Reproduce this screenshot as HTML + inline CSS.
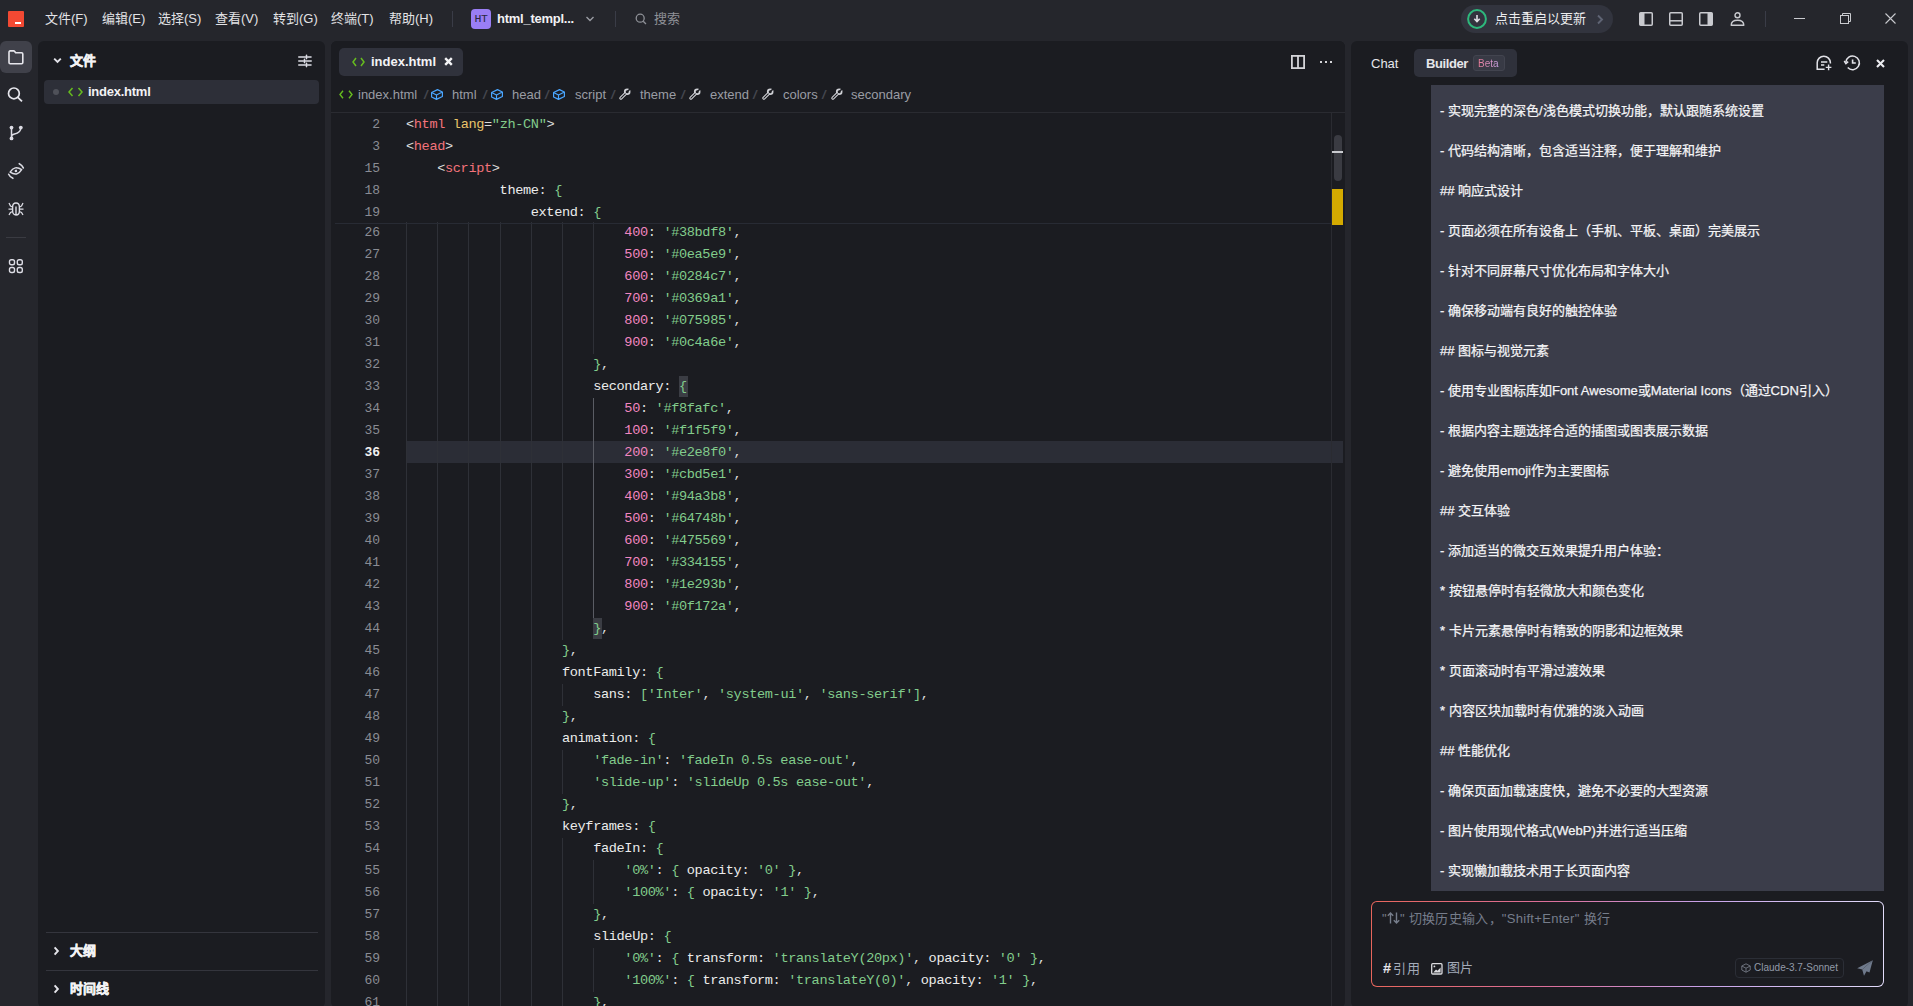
<!DOCTYPE html>
<html lang="zh-CN">
<head>
<meta charset="utf-8">
<style>
*{box-sizing:border-box;margin:0;padding:0}
html,body{width:1913px;height:1006px;overflow:hidden;background:#25262c;font-family:"Liberation Sans",sans-serif;color:#e4e4e7}
.abs{position:absolute}
svg{display:block;position:absolute;overflow:visible}
.menu{position:absolute;top:11px;font-size:13px;color:#e3e3e6;line-height:16px;white-space:nowrap}
.panel{position:absolute;background:#1b1c21;border-radius:6px}
#files{left:38px;top:41px;width:287px;height:967px}
#editor{left:331px;top:41px;width:1014px;height:967px;overflow:hidden}
#chat{left:1351px;top:41px;width:557px;height:967px}
.code{position:absolute;font-family:"Liberation Mono",monospace;font-size:13.6px;letter-spacing:-0.36px;line-height:22px;white-space:pre;color:#e6e6e6}
.ln{position:absolute;width:49px;left:0;text-align:right;font-family:"Liberation Mono",monospace;font-size:13px;line-height:22px;color:#8a8c94}
.ln.act{color:#f0f0f0;font-weight:bold}
.guide{position:absolute;width:1px;height:22px;background:#2e3037}
.guide.ga{background:#5a5c64}
.t{color:#f3737b}.p{color:#dcdcdc}.a{color:#e9c46a}.s{color:#82cc8c}.n{color:#f286c0}.b{color:#82cc8c}.k{color:#ececec}
.chatline{position:absolute;left:1440px;font-size:13px;line-height:16px;color:#f4f4f6;white-space:nowrap;-webkit-text-stroke:0.25px #f4f4f6}
.bc{position:absolute;top:87px;font-size:13px;line-height:16px;color:#9a9ca4;white-space:nowrap}
.sep{position:absolute;top:87px;font-size:13px;line-height:16px;color:#44464e;font-style:italic;font-weight:bold}
</style>
</head>
<body>
<!-- TITLE BAR -->
<div class="abs" style="left:8px;top:11px;width:16px;height:16px;background:#f24933;border-radius:1px"></div>
<div class="abs" style="left:15px;top:22px;width:6px;height:2px;background:#fff"></div>
<div class="menu" style="left:45px">文件(F)</div>
<div class="menu" style="left:102px">编辑(E)</div>
<div class="menu" style="left:158px">选择(S)</div>
<div class="menu" style="left:215px">查看(V)</div>
<div class="menu" style="left:273px">转到(G)</div>
<div class="menu" style="left:331px">终端(T)</div>
<div class="menu" style="left:389px">帮助(H)</div>
<div class="abs" style="left:452px;top:11px;width:1px;height:16px;background:#3a3c47"></div>
<div class="abs" style="left:471px;top:9px;width:20px;height:20px;background:#9a7ef4;border-radius:4px;font-family:'Liberation Mono',monospace;font-size:11.5px;line-height:20px;text-align:center;color:#2b2740;letter-spacing:-0.5px">HT</div>
<div class="menu" style="left:497px;font-weight:bold;color:#f2f2f4;letter-spacing:-0.25px">html_templ...</div>
<svg style="left:585px;top:15px" width="10" height="8" viewBox="0 0 10 8"><path d="M1.5 2 L5 5.5 L8.5 2" fill="none" stroke="#9a9ca3" stroke-width="1.4"/></svg>
<div class="abs" style="left:615px;top:11px;width:1px;height:16px;background:#3a3c47"></div>
<svg style="left:635px;top:13px" width="12" height="12" viewBox="0 0 12 12"><circle cx="5.2" cy="5.2" r="4" fill="none" stroke="#8e9097" stroke-width="1.3"/><path d="M8.2 8.2 L11 11" stroke="#8e9097" stroke-width="1.3"/></svg>
<div class="menu" style="left:654px;color:#8e9097">搜索</div>

<div class="abs" style="left:1461px;top:5px;width:152px;height:28px;background:#32343e;border-radius:14px"></div>
<svg style="left:1467px;top:9px" width="20" height="20" viewBox="0 0 20 20"><circle cx="10" cy="10" r="8.9" fill="none" stroke="#2eb87c" stroke-width="2"/><path d="M10 6 V12.5 M7.3 9.8 L10 12.6 L12.7 9.8" fill="none" stroke="#e0e0e6" stroke-width="1.6"/></svg>
<div class="menu" style="left:1495px;top:11px;color:#ececee">点击重启以更新</div>
<svg style="left:1596px;top:14px" width="8" height="11" viewBox="0 0 8 11"><path d="M2 1.5 L6 5.5 L2 9.5" fill="none" stroke="#5f6474" stroke-width="1.9"/></svg>
<svg style="left:1639px;top:12px" width="14" height="14" viewBox="0 0 14 14"><rect x="0.75" y="0.75" width="12.5" height="12.5" rx="1" fill="none" stroke="#c9cacf" stroke-width="1.5"/><rect x="0.8" y="0.8" width="4.7" height="12.4" rx="0.8" fill="#c9cacf"/></svg>
<svg style="left:1669px;top:12px" width="14" height="14" viewBox="0 0 14 14"><rect x="0.75" y="0.75" width="12.5" height="12.5" rx="1" fill="none" stroke="#c9cacf" stroke-width="1.5"/><path d="M1 8.8 H13" stroke="#c9cacf" stroke-width="1.5"/></svg>
<svg style="left:1699px;top:12px" width="14" height="14" viewBox="0 0 14 14"><rect x="0.75" y="0.75" width="12.5" height="12.5" rx="1" fill="none" stroke="#c9cacf" stroke-width="1.5"/><rect x="8.5" y="0.8" width="4.7" height="12.4" rx="0.8" fill="#c9cacf"/></svg>
<svg style="left:1730px;top:12px" width="15" height="15" viewBox="0 0 15 15"><circle cx="7.5" cy="3.3" r="2.5" fill="none" stroke="#c9cacf" stroke-width="1.4"/><path d="M1.2 13.3 C1.2 9.8 4 8.3 7.5 8.3 C11 8.3 13.8 9.8 13.8 13.3 Z" fill="none" stroke="#c9cacf" stroke-width="1.4" stroke-linejoin="round"/></svg>
<div class="abs" style="left:1765px;top:11px;width:1px;height:16px;background:#3a3c47"></div>
<div class="abs" style="left:1794px;top:18px;width:11px;height:1px;background:#c9cacf"></div>
<svg style="left:1840px;top:13px" width="11" height="11" viewBox="0 0 11 11"><rect x="0.5" y="2.5" width="8" height="8" fill="none" stroke="#c9cacf" stroke-width="1"/><path d="M2.5 2.5 V0.5 H10.5 V8.5 H8.5" fill="none" stroke="#c9cacf" stroke-width="1"/></svg>
<svg style="left:1885px;top:13px" width="11" height="11" viewBox="0 0 11 11"><path d="M0.5 0.5 L10.5 10.5 M10.5 0.5 L0.5 10.5" stroke="#c9cacf" stroke-width="1.1"/></svg>

<!-- ACTIVITY BAR -->
<div class="abs" style="left:0;top:41px;width:32px;height:32px;background:#40414a;border-radius:6px"></div>
<svg style="left:8px;top:50px" width="16" height="15" viewBox="0 0 16 15"><path d="M1 2.2 C1 1.4 1.4 0.9 2.2 0.9 H5.6 C6.1 0.9 6.4 1.1 6.7 1.5 L7.6 2.8 H13.6 C14.4 2.8 14.8 3.2 14.8 4 V12.6 C14.8 13.4 14.4 13.8 13.6 13.8 H2.2 C1.4 13.8 1 13.4 1 12.6 Z" fill="none" stroke="#e6e6ec" stroke-width="1.6"/></svg>
<svg style="left:7px;top:86px" width="17" height="17" viewBox="0 0 17 17"><circle cx="6.9" cy="7.4" r="5.4" fill="none" stroke="#e6e6ec" stroke-width="1.7"/><path d="M10.8 11.3 L15 15.3" stroke="#e6e6ec" stroke-width="1.8"/></svg>
<svg style="left:8px;top:124px" width="16" height="16" viewBox="0 0 16 16"><path d="M3.5 3.5 V14.5 M12.8 3.5 C12.8 8.5 9.5 9.5 6.5 10 C4.6 10.4 3.5 11.5 3.5 13" fill="none" stroke="#dcdce4" stroke-width="1.5"/><circle cx="3.5" cy="3.6" r="1.9" fill="#dcdce4"/><circle cx="12.8" cy="3.6" r="1.9" fill="#dcdce4"/><circle cx="3.5" cy="14.4" r="1.9" fill="#dcdce4"/></svg>
<svg style="left:6px;top:161px" width="20" height="20" viewBox="0 0 20 20"><g transform="translate(9.9 9.9) rotate(-12)"><path d="M-5.9 0 Q0 -6.2 5.9 0 Q0 6.2 -5.9 0 Z" fill="none" stroke="#dcdce4" stroke-width="1.5" stroke-linejoin="round"/><circle cx="0" cy="0" r="1.3" fill="#dcdce4"/></g><path d="M13.28 2.65 A8 8 0 0 1 17.32 6.9 M6.9 17.32 A8 8 0 0 1 2.65 13.28" fill="none" stroke="#dcdce4" stroke-width="1.6" stroke-linecap="round"/></svg>
<svg style="left:8px;top:202px" width="16" height="14" viewBox="0 0 16 14"><path d="M4.6 5 C4.6 2.6 6 1 8 1 C10 1 11.4 2.6 11.4 5 V9 C11.4 11.4 10 13 8 13 C6 13 4.6 11.4 4.6 9 Z M8 4.5 V13" fill="none" stroke="#dcdce4" stroke-width="1.4"/><path d="M1 1 L2.5 4 L4.6 5 M15 1 L13.5 4 L11.4 5 M0.5 7.2 H4.6 M15.5 7.2 H11.4 M1 13 L2.5 10.5 L4.6 9.5 M15 13 L13.5 10.5 L11.4 9.5" fill="none" stroke="#dcdce4" stroke-width="1.3"/></svg>
<div class="abs" style="left:6px;top:237px;width:20px;height:1px;background:#3a3b42"></div>
<svg style="left:8px;top:258px" width="16" height="16" viewBox="0 0 16 16"><rect x="1.5" y="1.7" width="5" height="5" rx="1.8" fill="none" stroke="#dcdce4" stroke-width="1.4"/><rect x="9.3" y="1.7" width="5" height="5" rx="1.8" fill="none" stroke="#dcdce4" stroke-width="1.4"/><rect x="1.5" y="9.5" width="5" height="5" rx="1.8" fill="none" stroke="#dcdce4" stroke-width="1.4"/><rect x="9.3" y="9.5" width="5" height="5" rx="1.8" fill="none" stroke="#dcdce4" stroke-width="1.4"/></svg>

<!-- FILES PANEL -->
<div id="files" class="panel"></div>
<svg style="left:53px;top:57px" width="9" height="7" viewBox="0 0 9 7"><path d="M1.2 1.6 L4.5 4.9 L7.8 1.6" fill="none" stroke="#e4e4ea" stroke-width="1.9"/></svg>
<div class="abs" style="left:70px;top:53px;font-size:13px;line-height:16px;font-weight:bold;color:#f2f2f4;-webkit-text-stroke:0.5px #f2f2f4">文件</div>
<svg style="left:298px;top:55px" width="14" height="12" viewBox="0 0 14 12"><path d="M0.8 2 H7.4 M9.6 2 H13 M0.8 6 H5.4 M7.6 6 H13.2 M0.8 10 H7.4 M9.6 10 H13" stroke="#dcdce4" stroke-width="1.6" stroke-linecap="round"/><path d="M8.5 0.4 V3.6 M6.5 4.4 V7.6 M8.5 8.4 V11.6" stroke="#dcdce4" stroke-width="1.6" stroke-linecap="round"/></svg>
<div class="abs" style="left:44px;top:80px;width:275px;height:24px;background:#2d2f38;border-radius:4px"></div>
<div class="abs" style="left:53px;top:89px;width:6px;height:6px;background:#4f5159;border-radius:50%"></div>
<svg style="left:68px;top:87px" width="15" height="10" viewBox="0 0 15 10"><path d="M4.5 1 L1 5 L4.5 9 M10.5 1 L14 5 L10.5 9" fill="none" stroke="#66bc1f" stroke-width="1.5"/></svg>
<div class="abs" style="left:88px;top:84px;font-size:13px;line-height:16px;font-weight:bold;color:#f2f2f4;letter-spacing:-0.25px">index.html</div>
<div class="abs" style="left:46px;top:932px;width:272px;height:1px;background:#34353d"></div>
<svg style="left:53px;top:946px" width="7" height="10" viewBox="0 0 7 10"><path d="M1.6 1.4 L4.9 5 L1.6 8.6" fill="none" stroke="#e4e4ea" stroke-width="1.9"/></svg>
<div class="abs" style="left:70px;top:943px;font-size:13px;line-height:16px;font-weight:bold;color:#f2f2f4;-webkit-text-stroke:0.5px #f2f2f4">大纲</div>
<div class="abs" style="left:46px;top:970px;width:272px;height:1px;background:#34353d"></div>
<svg style="left:53px;top:984px" width="7" height="10" viewBox="0 0 7 10"><path d="M1.6 1.4 L4.9 5 L1.6 8.6" fill="none" stroke="#e4e4ea" stroke-width="1.9"/></svg>
<div class="abs" style="left:70px;top:981px;font-size:13px;line-height:16px;font-weight:bold;color:#f2f2f4;-webkit-text-stroke:0.5px #f2f2f4">时间线</div>

<!-- EDITOR -->
<div id="editor" class="panel">
<div class="abs" style="left:75px;top:400px;width:937px;height:22px;background:#2b2d36"></div>
<div class="abs" style="left:348px;top:335px;width:9px;height:21px;background:#3b3d44"></div>
<div class="abs" style="left:262px;top:577px;width:9px;height:21px;background:#3b3d44"></div>
<div class="guide" style="left:75.0px;top:181px"></div>
<div class="guide" style="left:106.2px;top:181px"></div>
<div class="guide" style="left:137.4px;top:181px"></div>
<div class="guide" style="left:168.6px;top:181px"></div>
<div class="guide" style="left:199.8px;top:181px"></div>
<div class="guide" style="left:231.0px;top:181px"></div>
<div class="guide" style="left:262.2px;top:181px"></div>
<div class="guide" style="left:75.0px;top:203px"></div>
<div class="guide" style="left:106.2px;top:203px"></div>
<div class="guide" style="left:137.4px;top:203px"></div>
<div class="guide" style="left:168.6px;top:203px"></div>
<div class="guide" style="left:199.8px;top:203px"></div>
<div class="guide" style="left:231.0px;top:203px"></div>
<div class="guide" style="left:262.2px;top:203px"></div>
<div class="guide" style="left:75.0px;top:225px"></div>
<div class="guide" style="left:106.2px;top:225px"></div>
<div class="guide" style="left:137.4px;top:225px"></div>
<div class="guide" style="left:168.6px;top:225px"></div>
<div class="guide" style="left:199.8px;top:225px"></div>
<div class="guide" style="left:231.0px;top:225px"></div>
<div class="guide" style="left:262.2px;top:225px"></div>
<div class="guide" style="left:75.0px;top:247px"></div>
<div class="guide" style="left:106.2px;top:247px"></div>
<div class="guide" style="left:137.4px;top:247px"></div>
<div class="guide" style="left:168.6px;top:247px"></div>
<div class="guide" style="left:199.8px;top:247px"></div>
<div class="guide" style="left:231.0px;top:247px"></div>
<div class="guide" style="left:262.2px;top:247px"></div>
<div class="guide" style="left:75.0px;top:269px"></div>
<div class="guide" style="left:106.2px;top:269px"></div>
<div class="guide" style="left:137.4px;top:269px"></div>
<div class="guide" style="left:168.6px;top:269px"></div>
<div class="guide" style="left:199.8px;top:269px"></div>
<div class="guide" style="left:231.0px;top:269px"></div>
<div class="guide" style="left:262.2px;top:269px"></div>
<div class="guide" style="left:75.0px;top:291px"></div>
<div class="guide" style="left:106.2px;top:291px"></div>
<div class="guide" style="left:137.4px;top:291px"></div>
<div class="guide" style="left:168.6px;top:291px"></div>
<div class="guide" style="left:199.8px;top:291px"></div>
<div class="guide" style="left:231.0px;top:291px"></div>
<div class="guide" style="left:262.2px;top:291px"></div>
<div class="guide" style="left:75.0px;top:313px"></div>
<div class="guide" style="left:106.2px;top:313px"></div>
<div class="guide" style="left:137.4px;top:313px"></div>
<div class="guide" style="left:168.6px;top:313px"></div>
<div class="guide" style="left:199.8px;top:313px"></div>
<div class="guide" style="left:231.0px;top:313px"></div>
<div class="guide" style="left:75.0px;top:335px"></div>
<div class="guide" style="left:106.2px;top:335px"></div>
<div class="guide" style="left:137.4px;top:335px"></div>
<div class="guide" style="left:168.6px;top:335px"></div>
<div class="guide" style="left:199.8px;top:335px"></div>
<div class="guide" style="left:231.0px;top:335px"></div>
<div class="guide" style="left:75.0px;top:357px"></div>
<div class="guide" style="left:106.2px;top:357px"></div>
<div class="guide" style="left:137.4px;top:357px"></div>
<div class="guide" style="left:168.6px;top:357px"></div>
<div class="guide" style="left:199.8px;top:357px"></div>
<div class="guide" style="left:231.0px;top:357px"></div>
<div class="guide ga" style="left:262.2px;top:357px"></div>
<div class="guide" style="left:75.0px;top:379px"></div>
<div class="guide" style="left:106.2px;top:379px"></div>
<div class="guide" style="left:137.4px;top:379px"></div>
<div class="guide" style="left:168.6px;top:379px"></div>
<div class="guide" style="left:199.8px;top:379px"></div>
<div class="guide" style="left:231.0px;top:379px"></div>
<div class="guide ga" style="left:262.2px;top:379px"></div>
<div class="guide" style="left:75.0px;top:401px"></div>
<div class="guide" style="left:106.2px;top:401px"></div>
<div class="guide" style="left:137.4px;top:401px"></div>
<div class="guide" style="left:168.6px;top:401px"></div>
<div class="guide" style="left:199.8px;top:401px"></div>
<div class="guide" style="left:231.0px;top:401px"></div>
<div class="guide ga" style="left:262.2px;top:401px"></div>
<div class="guide" style="left:75.0px;top:423px"></div>
<div class="guide" style="left:106.2px;top:423px"></div>
<div class="guide" style="left:137.4px;top:423px"></div>
<div class="guide" style="left:168.6px;top:423px"></div>
<div class="guide" style="left:199.8px;top:423px"></div>
<div class="guide" style="left:231.0px;top:423px"></div>
<div class="guide ga" style="left:262.2px;top:423px"></div>
<div class="guide" style="left:75.0px;top:445px"></div>
<div class="guide" style="left:106.2px;top:445px"></div>
<div class="guide" style="left:137.4px;top:445px"></div>
<div class="guide" style="left:168.6px;top:445px"></div>
<div class="guide" style="left:199.8px;top:445px"></div>
<div class="guide" style="left:231.0px;top:445px"></div>
<div class="guide ga" style="left:262.2px;top:445px"></div>
<div class="guide" style="left:75.0px;top:467px"></div>
<div class="guide" style="left:106.2px;top:467px"></div>
<div class="guide" style="left:137.4px;top:467px"></div>
<div class="guide" style="left:168.6px;top:467px"></div>
<div class="guide" style="left:199.8px;top:467px"></div>
<div class="guide" style="left:231.0px;top:467px"></div>
<div class="guide ga" style="left:262.2px;top:467px"></div>
<div class="guide" style="left:75.0px;top:489px"></div>
<div class="guide" style="left:106.2px;top:489px"></div>
<div class="guide" style="left:137.4px;top:489px"></div>
<div class="guide" style="left:168.6px;top:489px"></div>
<div class="guide" style="left:199.8px;top:489px"></div>
<div class="guide" style="left:231.0px;top:489px"></div>
<div class="guide ga" style="left:262.2px;top:489px"></div>
<div class="guide" style="left:75.0px;top:511px"></div>
<div class="guide" style="left:106.2px;top:511px"></div>
<div class="guide" style="left:137.4px;top:511px"></div>
<div class="guide" style="left:168.6px;top:511px"></div>
<div class="guide" style="left:199.8px;top:511px"></div>
<div class="guide" style="left:231.0px;top:511px"></div>
<div class="guide ga" style="left:262.2px;top:511px"></div>
<div class="guide" style="left:75.0px;top:533px"></div>
<div class="guide" style="left:106.2px;top:533px"></div>
<div class="guide" style="left:137.4px;top:533px"></div>
<div class="guide" style="left:168.6px;top:533px"></div>
<div class="guide" style="left:199.8px;top:533px"></div>
<div class="guide" style="left:231.0px;top:533px"></div>
<div class="guide ga" style="left:262.2px;top:533px"></div>
<div class="guide" style="left:75.0px;top:555px"></div>
<div class="guide" style="left:106.2px;top:555px"></div>
<div class="guide" style="left:137.4px;top:555px"></div>
<div class="guide" style="left:168.6px;top:555px"></div>
<div class="guide" style="left:199.8px;top:555px"></div>
<div class="guide" style="left:231.0px;top:555px"></div>
<div class="guide ga" style="left:262.2px;top:555px"></div>
<div class="guide" style="left:75.0px;top:577px"></div>
<div class="guide" style="left:106.2px;top:577px"></div>
<div class="guide" style="left:137.4px;top:577px"></div>
<div class="guide" style="left:168.6px;top:577px"></div>
<div class="guide" style="left:199.8px;top:577px"></div>
<div class="guide" style="left:231.0px;top:577px"></div>
<div class="guide" style="left:75.0px;top:599px"></div>
<div class="guide" style="left:106.2px;top:599px"></div>
<div class="guide" style="left:137.4px;top:599px"></div>
<div class="guide" style="left:168.6px;top:599px"></div>
<div class="guide" style="left:199.8px;top:599px"></div>
<div class="guide" style="left:75.0px;top:621px"></div>
<div class="guide" style="left:106.2px;top:621px"></div>
<div class="guide" style="left:137.4px;top:621px"></div>
<div class="guide" style="left:168.6px;top:621px"></div>
<div class="guide" style="left:199.8px;top:621px"></div>
<div class="guide" style="left:75.0px;top:643px"></div>
<div class="guide" style="left:106.2px;top:643px"></div>
<div class="guide" style="left:137.4px;top:643px"></div>
<div class="guide" style="left:168.6px;top:643px"></div>
<div class="guide" style="left:199.8px;top:643px"></div>
<div class="guide" style="left:231.0px;top:643px"></div>
<div class="guide" style="left:75.0px;top:665px"></div>
<div class="guide" style="left:106.2px;top:665px"></div>
<div class="guide" style="left:137.4px;top:665px"></div>
<div class="guide" style="left:168.6px;top:665px"></div>
<div class="guide" style="left:199.8px;top:665px"></div>
<div class="guide" style="left:75.0px;top:687px"></div>
<div class="guide" style="left:106.2px;top:687px"></div>
<div class="guide" style="left:137.4px;top:687px"></div>
<div class="guide" style="left:168.6px;top:687px"></div>
<div class="guide" style="left:199.8px;top:687px"></div>
<div class="guide" style="left:75.0px;top:709px"></div>
<div class="guide" style="left:106.2px;top:709px"></div>
<div class="guide" style="left:137.4px;top:709px"></div>
<div class="guide" style="left:168.6px;top:709px"></div>
<div class="guide" style="left:199.8px;top:709px"></div>
<div class="guide" style="left:231.0px;top:709px"></div>
<div class="guide" style="left:75.0px;top:731px"></div>
<div class="guide" style="left:106.2px;top:731px"></div>
<div class="guide" style="left:137.4px;top:731px"></div>
<div class="guide" style="left:168.6px;top:731px"></div>
<div class="guide" style="left:199.8px;top:731px"></div>
<div class="guide" style="left:231.0px;top:731px"></div>
<div class="guide" style="left:75.0px;top:753px"></div>
<div class="guide" style="left:106.2px;top:753px"></div>
<div class="guide" style="left:137.4px;top:753px"></div>
<div class="guide" style="left:168.6px;top:753px"></div>
<div class="guide" style="left:199.8px;top:753px"></div>
<div class="guide" style="left:75.0px;top:775px"></div>
<div class="guide" style="left:106.2px;top:775px"></div>
<div class="guide" style="left:137.4px;top:775px"></div>
<div class="guide" style="left:168.6px;top:775px"></div>
<div class="guide" style="left:199.8px;top:775px"></div>
<div class="guide" style="left:75.0px;top:797px"></div>
<div class="guide" style="left:106.2px;top:797px"></div>
<div class="guide" style="left:137.4px;top:797px"></div>
<div class="guide" style="left:168.6px;top:797px"></div>
<div class="guide" style="left:199.8px;top:797px"></div>
<div class="guide" style="left:231.0px;top:797px"></div>
<div class="guide" style="left:75.0px;top:819px"></div>
<div class="guide" style="left:106.2px;top:819px"></div>
<div class="guide" style="left:137.4px;top:819px"></div>
<div class="guide" style="left:168.6px;top:819px"></div>
<div class="guide" style="left:199.8px;top:819px"></div>
<div class="guide" style="left:231.0px;top:819px"></div>
<div class="guide" style="left:262.2px;top:819px"></div>
<div class="guide" style="left:75.0px;top:841px"></div>
<div class="guide" style="left:106.2px;top:841px"></div>
<div class="guide" style="left:137.4px;top:841px"></div>
<div class="guide" style="left:168.6px;top:841px"></div>
<div class="guide" style="left:199.8px;top:841px"></div>
<div class="guide" style="left:231.0px;top:841px"></div>
<div class="guide" style="left:262.2px;top:841px"></div>
<div class="guide" style="left:75.0px;top:863px"></div>
<div class="guide" style="left:106.2px;top:863px"></div>
<div class="guide" style="left:137.4px;top:863px"></div>
<div class="guide" style="left:168.6px;top:863px"></div>
<div class="guide" style="left:199.8px;top:863px"></div>
<div class="guide" style="left:231.0px;top:863px"></div>
<div class="guide" style="left:75.0px;top:885px"></div>
<div class="guide" style="left:106.2px;top:885px"></div>
<div class="guide" style="left:137.4px;top:885px"></div>
<div class="guide" style="left:168.6px;top:885px"></div>
<div class="guide" style="left:199.8px;top:885px"></div>
<div class="guide" style="left:231.0px;top:885px"></div>
<div class="guide" style="left:75.0px;top:907px"></div>
<div class="guide" style="left:106.2px;top:907px"></div>
<div class="guide" style="left:137.4px;top:907px"></div>
<div class="guide" style="left:168.6px;top:907px"></div>
<div class="guide" style="left:199.8px;top:907px"></div>
<div class="guide" style="left:231.0px;top:907px"></div>
<div class="guide" style="left:262.2px;top:907px"></div>
<div class="guide" style="left:75.0px;top:929px"></div>
<div class="guide" style="left:106.2px;top:929px"></div>
<div class="guide" style="left:137.4px;top:929px"></div>
<div class="guide" style="left:168.6px;top:929px"></div>
<div class="guide" style="left:199.8px;top:929px"></div>
<div class="guide" style="left:231.0px;top:929px"></div>
<div class="guide" style="left:262.2px;top:929px"></div>
<div class="guide" style="left:75.0px;top:951px"></div>
<div class="guide" style="left:106.2px;top:951px"></div>
<div class="guide" style="left:137.4px;top:951px"></div>
<div class="guide" style="left:168.6px;top:951px"></div>
<div class="guide" style="left:199.8px;top:951px"></div>
<div class="guide" style="left:231.0px;top:951px"></div>
<div class="ln" style="top:181px">26</div>
<div class="ln" style="top:203px">27</div>
<div class="ln" style="top:225px">28</div>
<div class="ln" style="top:247px">29</div>
<div class="ln" style="top:269px">30</div>
<div class="ln" style="top:291px">31</div>
<div class="ln" style="top:313px">32</div>
<div class="ln" style="top:335px">33</div>
<div class="ln" style="top:357px">34</div>
<div class="ln" style="top:379px">35</div>
<div class="ln act" style="top:401px">36</div>
<div class="ln" style="top:423px">37</div>
<div class="ln" style="top:445px">38</div>
<div class="ln" style="top:467px">39</div>
<div class="ln" style="top:489px">40</div>
<div class="ln" style="top:511px">41</div>
<div class="ln" style="top:533px">42</div>
<div class="ln" style="top:555px">43</div>
<div class="ln" style="top:577px">44</div>
<div class="ln" style="top:599px">45</div>
<div class="ln" style="top:621px">46</div>
<div class="ln" style="top:643px">47</div>
<div class="ln" style="top:665px">48</div>
<div class="ln" style="top:687px">49</div>
<div class="ln" style="top:709px">50</div>
<div class="ln" style="top:731px">51</div>
<div class="ln" style="top:753px">52</div>
<div class="ln" style="top:775px">53</div>
<div class="ln" style="top:797px">54</div>
<div class="ln" style="top:819px">55</div>
<div class="ln" style="top:841px">56</div>
<div class="ln" style="top:863px">57</div>
<div class="ln" style="top:885px">58</div>
<div class="ln" style="top:907px">59</div>
<div class="ln" style="top:929px">60</div>
<div class="ln" style="top:951px">61</div>
<div class="code" style="top:181px;left:75px">                            <span class="n">400</span><span class="p">:</span><span class="p"> </span><span class="s">'#38bdf8'</span><span class="p">,</span></div>
<div class="code" style="top:203px;left:75px">                            <span class="n">500</span><span class="p">:</span><span class="p"> </span><span class="s">'#0ea5e9'</span><span class="p">,</span></div>
<div class="code" style="top:225px;left:75px">                            <span class="n">600</span><span class="p">:</span><span class="p"> </span><span class="s">'#0284c7'</span><span class="p">,</span></div>
<div class="code" style="top:247px;left:75px">                            <span class="n">700</span><span class="p">:</span><span class="p"> </span><span class="s">'#0369a1'</span><span class="p">,</span></div>
<div class="code" style="top:269px;left:75px">                            <span class="n">800</span><span class="p">:</span><span class="p"> </span><span class="s">'#075985'</span><span class="p">,</span></div>
<div class="code" style="top:291px;left:75px">                            <span class="n">900</span><span class="p">:</span><span class="p"> </span><span class="s">'#0c4a6e'</span><span class="p">,</span></div>
<div class="code" style="top:313px;left:75px">                        <span class="b">}</span><span class="p">,</span></div>
<div class="code" style="top:335px;left:75px">                        <span class="k">secondary</span><span class="p">:</span><span class="p"> </span><span class="b">{</span></div>
<div class="code" style="top:357px;left:75px">                            <span class="n">50</span><span class="p">:</span><span class="p"> </span><span class="s">'#f8fafc'</span><span class="p">,</span></div>
<div class="code" style="top:379px;left:75px">                            <span class="n">100</span><span class="p">:</span><span class="p"> </span><span class="s">'#f1f5f9'</span><span class="p">,</span></div>
<div class="code" style="top:401px;left:75px">                            <span class="n">200</span><span class="p">:</span><span class="p"> </span><span class="s">'#e2e8f0'</span><span class="p">,</span></div>
<div class="code" style="top:423px;left:75px">                            <span class="n">300</span><span class="p">:</span><span class="p"> </span><span class="s">'#cbd5e1'</span><span class="p">,</span></div>
<div class="code" style="top:445px;left:75px">                            <span class="n">400</span><span class="p">:</span><span class="p"> </span><span class="s">'#94a3b8'</span><span class="p">,</span></div>
<div class="code" style="top:467px;left:75px">                            <span class="n">500</span><span class="p">:</span><span class="p"> </span><span class="s">'#64748b'</span><span class="p">,</span></div>
<div class="code" style="top:489px;left:75px">                            <span class="n">600</span><span class="p">:</span><span class="p"> </span><span class="s">'#475569'</span><span class="p">,</span></div>
<div class="code" style="top:511px;left:75px">                            <span class="n">700</span><span class="p">:</span><span class="p"> </span><span class="s">'#334155'</span><span class="p">,</span></div>
<div class="code" style="top:533px;left:75px">                            <span class="n">800</span><span class="p">:</span><span class="p"> </span><span class="s">'#1e293b'</span><span class="p">,</span></div>
<div class="code" style="top:555px;left:75px">                            <span class="n">900</span><span class="p">:</span><span class="p"> </span><span class="s">'#0f172a'</span><span class="p">,</span></div>
<div class="code" style="top:577px;left:75px">                        <span class="b">}</span><span class="p">,</span></div>
<div class="code" style="top:599px;left:75px">                    <span class="b">}</span><span class="p">,</span></div>
<div class="code" style="top:621px;left:75px">                    <span class="k">fontFamily</span><span class="p">:</span><span class="p"> </span><span class="b">{</span></div>
<div class="code" style="top:643px;left:75px">                        <span class="k">sans</span><span class="p">:</span><span class="p"> </span><span class="b">[</span><span class="s">'Inter'</span><span class="p">,</span><span class="p"> </span><span class="s">'system-ui'</span><span class="p">,</span><span class="p"> </span><span class="s">'sans-serif'</span><span class="b">]</span><span class="p">,</span></div>
<div class="code" style="top:665px;left:75px">                    <span class="b">}</span><span class="p">,</span></div>
<div class="code" style="top:687px;left:75px">                    <span class="k">animation</span><span class="p">:</span><span class="p"> </span><span class="b">{</span></div>
<div class="code" style="top:709px;left:75px">                        <span class="s">'fade-in'</span><span class="p">:</span><span class="p"> </span><span class="s">'fadeIn 0.5s ease-out'</span><span class="p">,</span></div>
<div class="code" style="top:731px;left:75px">                        <span class="s">'slide-up'</span><span class="p">:</span><span class="p"> </span><span class="s">'slideUp 0.5s ease-out'</span><span class="p">,</span></div>
<div class="code" style="top:753px;left:75px">                    <span class="b">}</span><span class="p">,</span></div>
<div class="code" style="top:775px;left:75px">                    <span class="k">keyframes</span><span class="p">:</span><span class="p"> </span><span class="b">{</span></div>
<div class="code" style="top:797px;left:75px">                        <span class="k">fadeIn</span><span class="p">:</span><span class="p"> </span><span class="b">{</span></div>
<div class="code" style="top:819px;left:75px">                            <span class="s">'0%'</span><span class="p">:</span><span class="p"> </span><span class="b">{</span><span class="p"> </span><span class="k">opacity</span><span class="p">:</span><span class="p"> </span><span class="s">'0'</span><span class="p"> </span><span class="b">}</span><span class="p">,</span></div>
<div class="code" style="top:841px;left:75px">                            <span class="s">'100%'</span><span class="p">:</span><span class="p"> </span><span class="b">{</span><span class="p"> </span><span class="k">opacity</span><span class="p">:</span><span class="p"> </span><span class="s">'1'</span><span class="p"> </span><span class="b">}</span><span class="p">,</span></div>
<div class="code" style="top:863px;left:75px">                        <span class="b">}</span><span class="p">,</span></div>
<div class="code" style="top:885px;left:75px">                        <span class="k">slideUp</span><span class="p">:</span><span class="p"> </span><span class="b">{</span></div>
<div class="code" style="top:907px;left:75px">                            <span class="s">'0%'</span><span class="p">:</span><span class="p"> </span><span class="b">{</span><span class="p"> </span><span class="k">transform</span><span class="p">:</span><span class="p"> </span><span class="s">'translateY(20px)'</span><span class="p">,</span><span class="p"> </span><span class="k">opacity</span><span class="p">:</span><span class="p"> </span><span class="s">'0'</span><span class="p"> </span><span class="b">}</span><span class="p">,</span></div>
<div class="code" style="top:929px;left:75px">                            <span class="s">'100%'</span><span class="p">:</span><span class="p"> </span><span class="b">{</span><span class="p"> </span><span class="k">transform</span><span class="p">:</span><span class="p"> </span><span class="s">'translateY(0)'</span><span class="p">,</span><span class="p"> </span><span class="k">opacity</span><span class="p">:</span><span class="p"> </span><span class="s">'1'</span><span class="p"> </span><span class="b">}</span><span class="p">,</span></div>
<div class="code" style="top:951px;left:75px">                        <span class="b">}</span><span class="p">,</span></div>

<div class="abs" style="left:0;top:71px;width:1000px;height:110px;background:#1b1c21"></div>
<div class="code" style="top:73px;left:75px"><span class="p">&lt;</span><span class="t">html</span><span class="p"> </span><span class="a">lang</span><span class="p">=</span><span class="s">"zh-CN"</span><span class="p">&gt;</span></div>
<div class="ln" style="top:73px">2</div>
<div class="code" style="top:95px;left:75px"><span class="p">&lt;</span><span class="t">head</span><span class="p">&gt;</span></div>
<div class="ln" style="top:95px">3</div>
<div class="code" style="top:117px;left:75px">    <span class="p">&lt;</span><span class="t">script</span><span class="p">&gt;</span></div>
<div class="ln" style="top:117px">15</div>
<div class="code" style="top:139px;left:75px">            <span class="k">theme</span><span class="p">: </span><span class="b">{</span></div>
<div class="ln" style="top:139px">18</div>
<div class="code" style="top:161px;left:75px">                <span class="k">extend</span><span class="p">: </span><span class="b">{</span></div>
<div class="ln" style="top:161px">19</div>

<div class="abs" style="left:4px;top:182px;width:996px;height:1px;background:#282b34"></div>
<div class="abs" style="left:0;top:0;width:1014px;height:71px;background:#1b1c21"></div>
<div class="abs" style="left:0;top:71px;width:1014px;height:1px;background:#2a2b31"></div>
<div class="abs" style="left:1000px;top:72px;width:1px;height:900px;background:#2a2b31"></div>
<div class="abs" style="left:1003px;top:94px;width:8px;height:46px;background:#3a3b42;border-radius:4px"></div>
<div class="abs" style="left:1001px;top:110px;width:11px;height:2px;background:#c9cacf"></div>
<div class="abs" style="left:1001px;top:148px;width:11px;height:36px;background:#d4aa00"></div>
</div>
<!-- tab -->
<div class="abs" style="left:339px;top:48px;width:124px;height:28px;background:#30323c;border-radius:5px"></div>
<svg style="left:352px;top:57px" width="13" height="10" viewBox="0 0 13 10"><path d="M4 1 L1 5 L4 9 M9 1 L12 5 L9 9" fill="none" stroke="#66bc1f" stroke-width="1.5"/></svg>
<div class="abs" style="left:371px;top:54px;font-size:13px;line-height:16px;font-weight:bold;color:#f4f4f6">index.html</div>
<svg style="left:444px;top:57px" width="9" height="9" viewBox="0 0 9 9"><path d="M1.2 1.2 L7.8 7.8 M7.8 1.2 L1.2 7.8" stroke="#f4f4f6" stroke-width="2.4"/></svg>
<svg style="left:1291px;top:55px" width="14" height="14" viewBox="0 0 14 14"><rect x="0.9" y="0.9" width="12.2" height="12.2" fill="none" stroke="#d4d4d8" stroke-width="1.8"/><path d="M7 1 V13" stroke="#d4d4d8" stroke-width="1.8"/></svg>
<div class="abs" style="left:1320px;top:61px;width:2px;height:2px;background:#d4d4d8"></div>
<div class="abs" style="left:1325px;top:61px;width:2px;height:2px;background:#d4d4d8"></div>
<div class="abs" style="left:1330px;top:61px;width:2px;height:2px;background:#d4d4d8"></div>
<!-- breadcrumb -->
<svg style="left:339px;top:90px" width="14" height="9" viewBox="0 0 14 9"><path d="M4 0.8 L1 4.5 L4 8.2 M10 0.8 L13 4.5 L10 8.2" fill="none" stroke="#66bc1f" stroke-width="1.4"/></svg>
<div class="bc" style="left:358px">index.html</div>
<div class="sep" style="left:424px">/</div>
<svg style="left:431px;top:89px" width="12" height="11" viewBox="0 0 12 11"><path d="M0.6 3.5 L6.5 0.6 L11.4 3 V7.5 L5.5 10.4 L0.6 8 Z M0.6 3.5 L5.5 6 L11.4 3 M5.5 6 V10.4" fill="none" stroke="#4aa6ff" stroke-width="1.2" stroke-linejoin="round"/></svg>
<div class="bc" style="left:452px">html</div>
<div class="sep" style="left:483px">/</div>
<svg style="left:491px;top:89px" width="12" height="11" viewBox="0 0 12 11"><path d="M0.6 3.5 L6.5 0.6 L11.4 3 V7.5 L5.5 10.4 L0.6 8 Z M0.6 3.5 L5.5 6 L11.4 3 M5.5 6 V10.4" fill="none" stroke="#4aa6ff" stroke-width="1.2" stroke-linejoin="round"/></svg>
<div class="bc" style="left:512px">head</div>
<div class="sep" style="left:545px">/</div>
<svg style="left:553px;top:89px" width="12" height="11" viewBox="0 0 12 11"><path d="M0.6 3.5 L6.5 0.6 L11.4 3 V7.5 L5.5 10.4 L0.6 8 Z M0.6 3.5 L5.5 6 L11.4 3 M5.5 6 V10.4" fill="none" stroke="#4aa6ff" stroke-width="1.2" stroke-linejoin="round"/></svg>
<div class="bc" style="left:575px">script</div>
<div class="sep" style="left:611px">/</div>
<svg style="left:619px;top:88px" width="12" height="12" viewBox="0 0 12 12"><path d="M1.9 10.1 L6.2 5.8" stroke="#d0d1d6" stroke-width="3.3" stroke-linecap="round"/><circle cx="8.2" cy="3.8" r="3.3" fill="#d0d1d6"/><path d="M1.9 10.1 L6.2 5.8" stroke="#1b1c21" stroke-width="1.1" stroke-linecap="round"/><circle cx="8.2" cy="3.8" r="1.5" fill="#1b1c21"/><path d="M8.2 3.8 L11.5 0.5" stroke="#1b1c21" stroke-width="1.6"/></svg>
<div class="bc" style="left:640px">theme</div>
<div class="sep" style="left:681px">/</div>
<svg style="left:689px;top:88px" width="12" height="12" viewBox="0 0 12 12"><path d="M1.9 10.1 L6.2 5.8" stroke="#d0d1d6" stroke-width="3.3" stroke-linecap="round"/><circle cx="8.2" cy="3.8" r="3.3" fill="#d0d1d6"/><path d="M1.9 10.1 L6.2 5.8" stroke="#1b1c21" stroke-width="1.1" stroke-linecap="round"/><circle cx="8.2" cy="3.8" r="1.5" fill="#1b1c21"/><path d="M8.2 3.8 L11.5 0.5" stroke="#1b1c21" stroke-width="1.6"/></svg>
<div class="bc" style="left:710px">extend</div>
<div class="sep" style="left:753px">/</div>
<svg style="left:762px;top:88px" width="12" height="12" viewBox="0 0 12 12"><path d="M1.9 10.1 L6.2 5.8" stroke="#d0d1d6" stroke-width="3.3" stroke-linecap="round"/><circle cx="8.2" cy="3.8" r="3.3" fill="#d0d1d6"/><path d="M1.9 10.1 L6.2 5.8" stroke="#1b1c21" stroke-width="1.1" stroke-linecap="round"/><circle cx="8.2" cy="3.8" r="1.5" fill="#1b1c21"/><path d="M8.2 3.8 L11.5 0.5" stroke="#1b1c21" stroke-width="1.6"/></svg>
<div class="bc" style="left:783px">colors</div>
<div class="sep" style="left:822px">/</div>
<svg style="left:831px;top:88px" width="12" height="12" viewBox="0 0 12 12"><path d="M1.9 10.1 L6.2 5.8" stroke="#d0d1d6" stroke-width="3.3" stroke-linecap="round"/><circle cx="8.2" cy="3.8" r="3.3" fill="#d0d1d6"/><path d="M1.9 10.1 L6.2 5.8" stroke="#1b1c21" stroke-width="1.1" stroke-linecap="round"/><circle cx="8.2" cy="3.8" r="1.5" fill="#1b1c21"/><path d="M8.2 3.8 L11.5 0.5" stroke="#1b1c21" stroke-width="1.6"/></svg>
<div class="bc" style="left:851px">secondary</div>

<!-- CHAT PANEL -->
<div id="chat" class="panel"></div>
<div class="abs" style="left:1371px;top:56px;font-size:13px;line-height:16px;color:#e6e6ea">Chat</div>
<div class="abs" style="left:1414px;top:49px;width:103px;height:28px;background:#2f313b;border-radius:5px"></div>
<div class="abs" style="left:1426px;top:56px;font-size:13px;line-height:16px;font-weight:bold;color:#e6e6ea;letter-spacing:-0.4px">Builder</div>
<div class="abs" style="left:1473px;top:55px;width:32px;height:16px;background:#383a45;border:1px solid #42444f;border-radius:3px"></div><div class="abs" style="left:1478px;top:57px;font-size:10px;line-height:14px;background:linear-gradient(90deg,#e97a96,#c9a3e6);-webkit-background-clip:text;background-clip:text;color:transparent">Beta</div>
<svg style="left:1816px;top:55px" width="16" height="16" viewBox="0 0 16 16"><path d="M8.6 14.2 H1.2 V7.8 A6.6 6.6 0 0 1 14.4 7.8 V8.6" fill="none" stroke="#e2e2e8" stroke-width="1.5"/><path d="M5 7 H11.3 M5 10 H8.3" stroke="#e2e2e8" stroke-width="1.5"/><path d="M12.6 9.6 V15.2 M9.8 12.4 H15.4" stroke="#e2e2e8" stroke-width="1.4"/></svg>
<svg style="left:1844px;top:55px" width="16" height="16" viewBox="0 0 16 16"><path d="M3.7 12.6 A6.8 6.8 0 1 0 1.8 7.4" fill="none" stroke="#e2e2e8" stroke-width="1.5"/><path d="M0.2 6 L1.9 8.6 L4.2 6.6" fill="none" stroke="#e2e2e8" stroke-width="1.4"/><path d="M8.6 4.6 V8 H11.8" fill="none" stroke="#e2e2e8" stroke-width="1.6"/></svg>
<svg style="left:1876px;top:59px" width="9" height="9" viewBox="0 0 9 9"><path d="M1 1 L8 8 M8 1 L1 8" stroke="#ececf0" stroke-width="2.1"/></svg>
<div class="abs" style="left:1431px;top:85px;width:453px;height:806px;background:#3b3d4a"></div>
<div class="chatline" style="top:103px">- 实现完整的深色/浅色模式切换功能，默认跟随系统设置</div>
<div class="chatline" style="top:143px">- 代码结构清晰，包含适当注释，便于理解和维护</div>
<div class="chatline" style="top:183px">## 响应式设计</div>
<div class="chatline" style="top:223px">- 页面必须在所有设备上（手机、平板、桌面）完美展示</div>
<div class="chatline" style="top:263px">- 针对不同屏幕尺寸优化布局和字体大小</div>
<div class="chatline" style="top:303px">- 确保移动端有良好的触控体验</div>
<div class="chatline" style="top:343px">## 图标与视觉元素</div>
<div class="chatline" style="top:383px">- 使用专业图标库如Font Awesome或Material Icons（通过CDN引入）</div>
<div class="chatline" style="top:423px">- 根据内容主题选择合适的插图或图表展示数据</div>
<div class="chatline" style="top:463px">- 避免使用emoji作为主要图标</div>
<div class="chatline" style="top:503px">## 交互体验</div>
<div class="chatline" style="top:543px">- 添加适当的微交互效果提升用户体验：</div>
<div class="chatline" style="top:583px">* 按钮悬停时有轻微放大和颜色变化</div>
<div class="chatline" style="top:623px">* 卡片元素悬停时有精致的阴影和边框效果</div>
<div class="chatline" style="top:663px">* 页面滚动时有平滑过渡效果</div>
<div class="chatline" style="top:703px">* 内容区块加载时有优雅的淡入动画</div>
<div class="chatline" style="top:743px">## 性能优化</div>
<div class="chatline" style="top:783px">- 确保页面加载速度快，避免不必要的大型资源</div>
<div class="chatline" style="top:823px">- 图片使用现代格式(WebP)并进行适当压缩</div>
<div class="chatline" style="top:863px">- 实现懒加载技术用于长页面内容</div>

<div class="abs" style="left:1371px;top:901px;width:513px;height:86px;border-radius:6px;background:linear-gradient(90deg,#e8665c 0%,#db6f9c 35%,#c8a2ea 65%,#e2dcfa 100%);"></div>
<div class="abs" style="left:1372px;top:902px;width:511px;height:84px;border-radius:5px;background:#1b1c21"></div>
<div class="abs" style="left:1382px;top:911px;font-size:13px;line-height:16px;color:#767d8b;white-space:nowrap;letter-spacing:0.3px">"<svg style="position:relative;display:inline-block;vertical-align:-1px" width="13" height="12" viewBox="0 0 13 12"><path d="M3.5 11.5 V1 M0.8 3.8 L3.5 1 L6.2 3.8 M9.5 0.5 V11 M6.8 8.2 L9.5 11 L12.2 8.2" fill="none" stroke="#767d8b" stroke-width="1.4"/></svg>" 切换历史输入，"Shift+Enter" 换行</div>
<div class="abs" style="left:1383px;top:960px;font-size:13px;line-height:16px;color:#a3abb9;white-space:nowrap"><b style="color:#e6e6ea;font-size:14.5px;margin-right:2px">#</b><span style="letter-spacing:0.5px">引用</span></div>
<svg style="left:1431px;top:963px" width="12" height="12" viewBox="0 0 12 12"><rect x="0.7" y="0.7" width="10.3" height="10.3" rx="1" fill="none" stroke="#dcdce0" stroke-width="1.3"/><path d="M2.3 9.6 L5 6.6 L6.5 7.8 L9.6 4.4 V9.6 Z" fill="#dcdce0"/><circle cx="3.4" cy="3.4" r="0.9" fill="#dcdce0"/></svg>
<div class="abs" style="left:1447px;top:960px;font-size:13px;line-height:16px;color:#a3abb9">图片</div>
<div class="abs" style="left:1735px;top:958px;width:109px;height:20px;border:1px solid #2b2e36;border-radius:4px;background:#1b1c21"></div>
<svg style="left:1741px;top:963px" width="10" height="10" viewBox="0 0 10 10"><path d="M5 0.8 L9.2 3 V7 L5 9.2 L0.8 7 V3 Z M0.8 3 L5 5.2 L9.2 3 M5 5.2 V9.2" fill="none" stroke="#6c717c" stroke-width="1"/></svg>
<div class="abs" style="left:1754px;top:962px;font-size:10px;line-height:12px;color:#929aa8;white-space:nowrap">Claude-3.7-Sonnet</div>
<svg style="left:1857px;top:960px" width="16" height="16" viewBox="0 0 16 16"><path d="M15.8 0.2 L0.2 8.2 L5.2 9.6 Z" fill="#6f7a8c"/><path d="M15.8 0.2 L5.2 9.6 L7 15.8 Z" fill="#6f7a8c"/><path d="M15.8 0.2 L7.5 10.5 L12.5 12.5 Z" fill="#6f7a8c"/></svg>
</body>
</html>
